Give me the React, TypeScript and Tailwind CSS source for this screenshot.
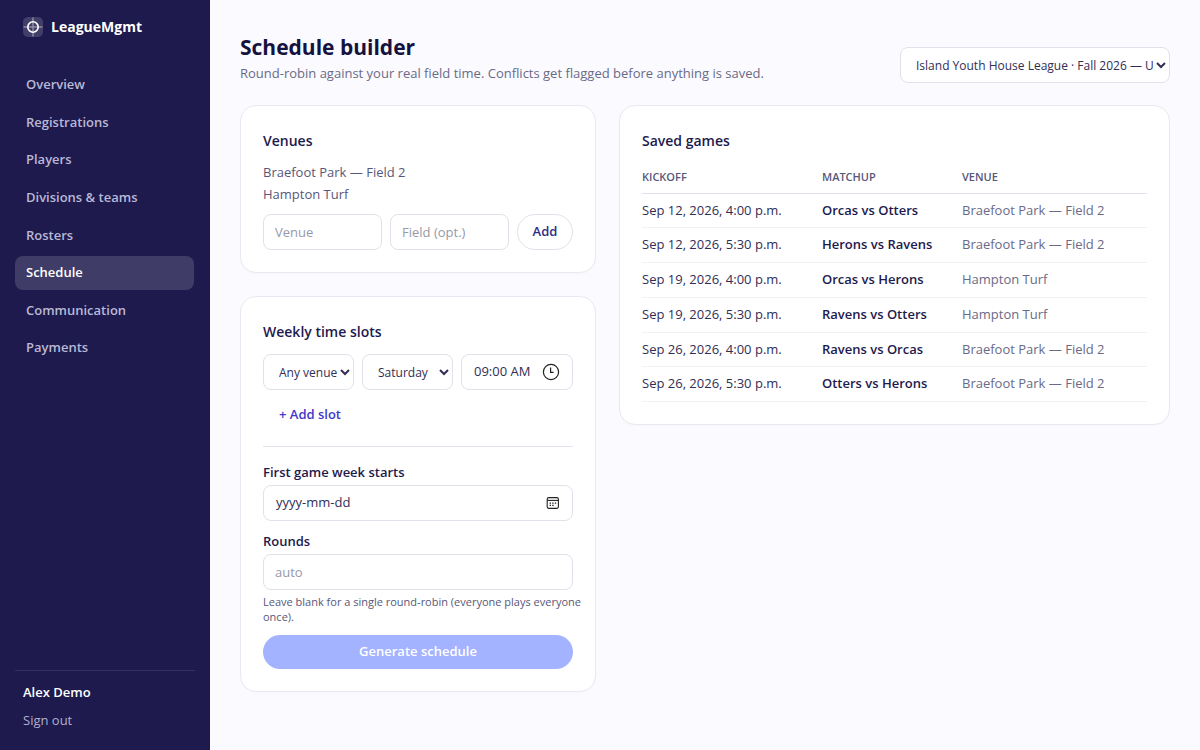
import React from 'react';
import clsx from 'clsx';

const NAV = [
  'Overview',
  'Registrations',
  'Players',
  'Divisions & teams',
  'Rosters',
  'Schedule',
  'Communication',
  'Payments',
];

const VENUES = ['Braefoot Park — Field 2', 'Hampton Turf'];

const GAMES = [
  { kickoff: 'Sep 12, 2026, 4:00 p.m.', matchup: 'Orcas vs Otters', venue: VENUES[0] },
  { kickoff: 'Sep 12, 2026, 5:30 p.m.', matchup: 'Herons vs Ravens', venue: VENUES[0] },
  { kickoff: 'Sep 19, 2026, 4:00 p.m.', matchup: 'Orcas vs Herons', venue: VENUES[1] },
  { kickoff: 'Sep 19, 2026, 5:30 p.m.', matchup: 'Ravens vs Otters', venue: VENUES[1] },
  { kickoff: 'Sep 26, 2026, 4:00 p.m.', matchup: 'Ravens vs Orcas', venue: VENUES[0] },
  { kickoff: 'Sep 26, 2026, 5:30 p.m.', matchup: 'Otters vs Herons', venue: VENUES[0] },
];

const field =
  'h-9 min-w-0 rounded-lg border border-[#e0e1ea] bg-white text-[#312e56] placeholder:text-[#9798a8]';

function Logo() {
  return (
    <svg width="20" height="20" viewBox="0 0 20 20" fill="none" aria-hidden>
      <rect width="20" height="20" rx="5" fill="#fff" fillOpacity="0.16" />
      <path d="M10 0.5v19M0.5 10h19" stroke="#fff" strokeOpacity="0.4" strokeWidth="1.5" />
      <circle cx="10" cy="10" r="5.2" stroke="#fff" strokeWidth="1.6" />
    </svg>
  );
}

function ClockIcon() {
  return (
    <svg width="18" height="18" viewBox="0 0 18 18" fill="none" stroke="#222" strokeWidth="1.2" aria-hidden>
      <circle cx="9" cy="9" r="7.6" />
      <path d="M8.6 4.6v4.8h3" />
    </svg>
  );
}

function CalendarIcon() {
  return (
    <svg width="14" height="14" viewBox="0 0 14 14" fill="none" stroke="#222" strokeWidth="1.1" aria-hidden>
      <rect x="1.2" y="1.6" width="11.2" height="10.8" rx="1.6" />
      <path d="M1.2 4.4h11.2" />
      <path d="M3.6 9.4h1.4M6.2 9.4h1.4M3.6 7.2h1.4M6.2 7.2h1.4M8.8 7.2h1.4" strokeWidth="1.3" />
    </svg>
  );
}

function Card({ title, children }: { title: string; children: React.ReactNode }) {
  return (
    <section className="rounded-2xl border border-[#e9e9f1] bg-white p-[22px] shadow-[0_1px_2px_rgba(30,27,75,0.02)]">
      <h2 className="mt-px text-[14px] leading-6 font-semibold text-indigo-950">{title}</h2>
      {children}
    </section>
  );
}

function Sidebar() {
  return (
    <aside className="flex w-[210px] shrink-0 flex-col bg-indigo-950 px-[15px] pb-[21px]">
      <div className="flex h-[53px] items-center gap-2 px-2 text-[14px] font-bold text-white">
        <Logo />
        LeagueMgmt
      </div>
      <nav className="mt-[15px] flex h-[297px] flex-col justify-between">
        {NAV.map((label) => (
          <a
            key={label}
            href="#"
            aria-current={label === 'Schedule' ? 'page' : undefined}
            className={clsx(
              'mr-px flex h-[34px] items-center rounded-lg px-[11px] text-[13px] font-semibold',
              label === 'Schedule' ? 'bg-white/15 text-white' : 'text-[#b9b8d6]',
            )}
          >
            {label}
          </a>
        ))}
      </nav>
      <div className="mt-auto border-t border-white/10 px-2 pt-3">
        <p className="text-[13px] leading-[18px] font-semibold text-white">Alex Demo</p>
        <button type="button" className="mt-2.5 block text-[13px] leading-[18px] text-[#b0afcc]">
          Sign out
        </button>
      </div>
    </aside>
  );
}

export default function App() {
  return (
    <div className="flex min-h-screen bg-[#fafaff] font-['Open_Sans',sans-serif] text-indigo-950">
      <Sidebar />
      <main className="min-w-0 flex-1 px-[30px] pt-[31px] pb-8">
        <header className="flex items-end justify-between gap-4">
          <div>
            <h1 className="text-[21px] leading-8 font-bold text-[#15123f]">Schedule builder</h1>
            <p className="text-[13px] leading-5 text-[#6a6a86]">
              Round-robin against your real field time. Conflicts get flagged before anything is saved.
            </p>
          </div>
          <select aria-label="Season" className={clsx(field, 'w-[270px] shrink-0 pl-[11px] text-[12px]')}>
            <option>Island Youth House League · Fall 2026 — U8 to U14</option>
          </select>
        </header>

        <div className="mt-[22px] grid grid-cols-[356px_minmax(0,1fr)] items-start gap-[23px]">
          <div className="flex flex-col gap-[23px]">
            <Card title="Venues">
              <ul className="mt-2 text-[13px] leading-[22px] text-[#57577a]">
                {VENUES.map((venue) => (
                  <li key={venue}>{venue}</li>
                ))}
              </ul>
              <form className="mt-[9px] flex gap-2">
                <input
                  aria-label="Venue"
                  placeholder="Venue"
                  className={clsx(field, 'flex-1 px-[11px] text-[13px]')}
                />
                <input
                  aria-label="Field"
                  placeholder="Field (opt.)"
                  className={clsx(field, 'flex-1 px-[11px] text-[13px]')}
                />
                <button
                  type="button"
                  className="h-9 w-14 rounded-full border border-[#e0e1ea] bg-white text-[13px] font-semibold text-indigo-900"
                >
                  Add
                </button>
              </form>
            </Card>

            <Card title="Weekly time slots">
              <div className="mt-2.5 flex gap-2">
                <select aria-label="Slot venue" className={clsx(field, 'flex-1 pl-[11px] text-[12px]')}>
                  <option>Any venue</option>
                </select>
                <select
                  aria-label="Slot day"
                  className={clsx(field, 'flex-1 pl-[11px] text-[12px]')}
                  defaultValue="Saturday"
                >
                  <option>Saturday</option>
                  <option>Sunday</option>
                </select>
                <div className={clsx(field, 'flex w-28 items-center justify-between px-3 text-[13px]')}>
                  <input aria-label="Slot time" defaultValue="09:00 AM" className="w-0 min-w-0 flex-1 outline-none" />
                  <button type="button" aria-label="Pick a time">
                    <ClockIcon />
                  </button>
                </div>
              </div>
              <button type="button" className="mt-[9px] block h-8 px-4 text-[13px] font-semibold text-[#4338ca]">
                + Add slot
              </button>

              <form className="mt-[15px] border-t border-[#e4e4ec] pt-4">
                <label htmlFor="start" className="block text-[13px] leading-[18px] font-semibold">
                  First game week starts
                </label>
                <div className={clsx(field, 'mt-1 flex items-center px-3 text-[13px]')}>
                  <input
                    id="start"
                    placeholder="yyyy-mm-dd"
                    className="min-w-0 flex-1 outline-none placeholder:text-[#312e56]"
                  />
                  <button type="button" aria-label="Pick a date">
                    <CalendarIcon />
                  </button>
                </div>
                <label htmlFor="rounds" className="mt-[11px] block text-[13px] leading-[18px] font-semibold">
                  Rounds
                </label>
                <input
                  id="rounds"
                  placeholder="auto"
                  className={clsx(field, 'mt-1 w-full px-[11px] text-[13px]')}
                />
                <p className="mt-1 -mr-4 text-[11px] leading-[15px] text-[#57577a]">
                  Leave blank for a single round-robin (everyone plays everyone once).
                </p>
                <button
                  type="button"
                  className="mt-[11px] h-[34px] w-full rounded-full bg-indigo-300 text-[13px] font-semibold text-white"
                >
                  Generate schedule
                </button>
              </form>
            </Card>
          </div>

          <Card title="Saved games">
            <table className="mt-2 h-[241px] w-full text-left text-[13px]">
              <thead>
                <tr className="h-8 border-b border-[#e2e2ec] text-[11px] text-[#57577a] uppercase">
                  <th className="w-[180px] font-semibold">Kickoff</th>
                  <th className="w-[140px] font-semibold">Matchup</th>
                  <th className="font-semibold">Venue</th>
                </tr>
              </thead>
              <tbody>
                {GAMES.map((game) => (
                  <tr key={game.kickoff} className="h-[34px] border-b border-[#f1f1f6]">
                    <td className="text-[#312e56]">{game.kickoff}</td>
                    <td className="font-semibold">{game.matchup}</td>
                    <td className="text-[#6a6a86]">{game.venue}</td>
                  </tr>
                ))}
              </tbody>
            </table>
          </Card>
        </div>
      </main>
    </div>
  );
}
